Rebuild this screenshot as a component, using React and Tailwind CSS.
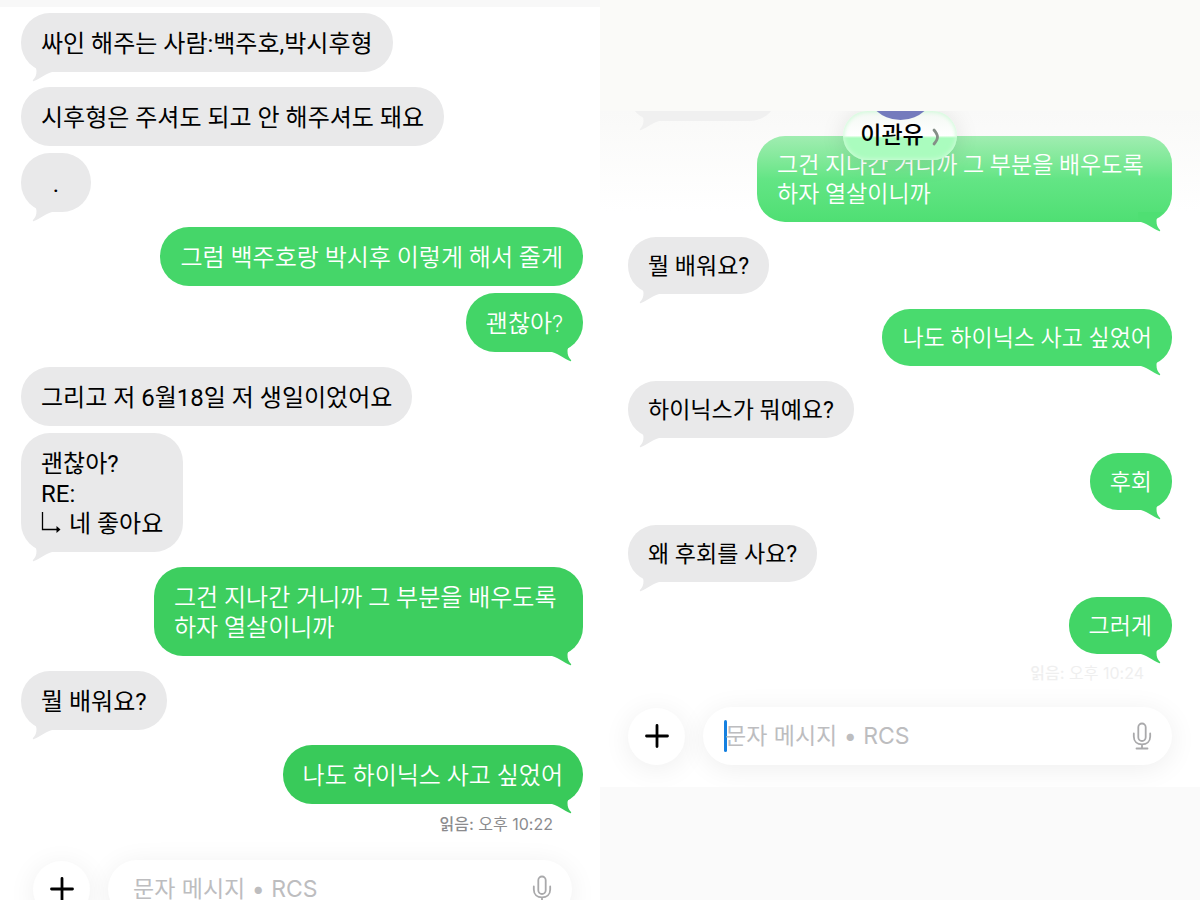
import React from 'react';
import clsx from 'clsx';

const firstChat = [
    { text: '싸인 해주는 사람:백주호,박시후형', tail: true },
    { text: '시후형은 주셔도 되고 안 해주셔도 돼요' },
    { text: '.', tail: true },
    { text: '그럼 백주호랑 박시후 이렇게 해서 줄게', mine: true, color: 'bg-[#45d669] text-[#45d669]' },
    { text: '괜찮아?', mine: true, tail: true, color: 'bg-[#43d567] text-[#43d567]' },
    { text: '그리고 저 6월18일 저 생일이었어요' },
    { reply: true, tail: true },
    {
        text: '그건 지나간 거니까 그 부분을 배우도록 하자 열살이니까',
        mine: true,
        tail: true,
        color: 'bg-[#3dce5f] text-[#3dce5f]',
    },
    { text: '뭘 배워요?', tail: true },
    { text: '나도 하이닉스 사고 싶었어', mine: true, tail: true, color: 'bg-[#39ca5a] text-[#39ca5a]' },
];

const secondChat = [
    {
        text: '그건 지나간 거니까 그 부분을 배우도록 하자 열살이니까',
        mine: true,
        tail: true,
        color: 'bg-linear-to-b from-[#a0edb1] via-[#63e585] to-[#4fdf73] text-[#4fdf73]',
    },
    { text: '뭘 배워요?', tail: true },
    { text: '나도 하이닉스 사고 싶었어', mine: true, tail: true, color: 'bg-[#49db6e] text-[#49db6e]' },
    { text: '하이닉스가 뭐예요?', tail: true },
    { text: '후회', mine: true, tail: true, color: 'bg-[#46d96b] text-[#46d96b]' },
    { text: '왜 후회를 사요?', tail: true },
    { text: '그러게', mine: true, tail: true, color: 'bg-[#42d566] text-[#42d566]' },
];

function Tail({ mine }) {
    return (
        <svg
            viewBox="0 0 28 26"
            fill="currentColor"
            aria-hidden="true"
            className={clsx('absolute -bottom-[10px] h-[26px] w-[28px]', mine ? 'right-2 -scale-x-100' : 'left-2')}
        >
            <path d="M0 6C4 9 7.500 11 7.500 15C7.500 19 6.500 21 4 24C3.500 25 4 25.500 5 25C11 23 18 16 26 15.500L26 6Z" />
        </svg>
    );
}

function ReplyText() {
    return (
        <>
            <span className="block">괜찮아?</span>
            <span className="block">RE:</span>
            <span className="flex items-center gap-2">
                <svg viewBox="0 0 20 24" fill="none" stroke="currentColor" strokeWidth="1.3" className="h-6 w-5" aria-hidden="true">
                    <path d="M1.500 -1V17.500H17" />
                    <path d="M15.500 14L19.500 17.500L15.500 21Z" fill="currentColor" stroke="none" />
                </svg>
                네 좋아요
            </span>
        </>
    );
}

function Bubble({ message, compact }) {
    const { text, mine, tail, reply, color } = message;
    return (
        <li
            className={clsx(
                'relative w-fit break-keep',
                compact
                    ? 'max-w-[415px] rounded-[28px] px-5 pt-[15px] pb-[13px] text-[23px] leading-[29px]'
                    : 'min-w-[70px] max-w-[429px] rounded-[29px] px-5 pt-4 pb-[13px] text-[24px] leading-[30px]',
                mine ? 'self-end' : 'self-start bg-[#e9e9ea] text-[#e9e9ea]',
                text === '.' && 'text-center',
                tail ? 'mb-[15px]' : !compact && 'mb-[7px]',
                color
            )}
        >
            {tail && <Tail mine={mine} />}
            <div className={clsx('relative', mine ? 'font-[350] text-white' : 'text-black')}>
                {reply ? <ReplyText /> : text}
            </div>
        </li>
    );
}

function MicIcon() {
    return (
        <svg viewBox="0 0 20 28" fill="none" stroke="#a9a9ab" strokeWidth="1.800" strokeLinecap="round" className="h-7 w-5">
            <rect x="6.300" y="1.500" width="7.400" height="17.500" rx="3.700" />
            <path d="M1.800 11.500V14.500C1.800 19.500 5.300 22.300 10 22.300S18.200 19.500 18.200 14.500V11.500M10 22.300V26.500M4.500 26.500H15.500" />
        </svg>
    );
}

function Composer({ id, focused }) {
    return (
        <form className="flex shrink-0 items-center gap-[18px]" onSubmit={(e) => e.preventDefault()}>
            <button
                type="button"
                aria-label="추가"
                className="flex size-[57px] shrink-0 items-center justify-center rounded-full bg-white shadow-[0_4px_28px_rgba(0,0,0,0.07)]"
            >
                <svg viewBox="0 0 24 24" stroke="#000" strokeWidth="2.800" strokeLinecap="round" className="size-6">
                    <path d="M12 1.500V22.500M1.500 12H22.500" />
                </svg>
            </button>
            <div
                className={clsx(
                    'flex h-[58px] min-w-0 flex-1 items-center rounded-full bg-white pr-5 shadow-[0_4px_28px_rgba(0,0,0,0.07)]',
                    focused ? 'pl-[21px]' : 'pl-[25px]'
                )}
            >
                {focused && <span className="-mr-[2px] h-8 w-[3px] shrink-0 rounded-full bg-[#1580e0]" />}
                <label htmlFor={id} className="sr-only">메시지 입력</label>
                <input
                    id={id}
                    type="text"
                    placeholder="문자 메시지 • RCS"
                    className="h-9 min-w-0 flex-1 bg-transparent font-[Inter,'Noto_Sans_CJK_KR',sans-serif] text-[23px] outline-none placeholder:text-[#bdbdbf]"
                />
                <button type="button" aria-label="음성 입력" className="shrink-0">
                    <MicIcon />
                </button>
            </div>
        </form>
    );
}

function ContactHeader() {
    return (
        <header className="absolute inset-x-0 top-0 flex justify-center">
            <button
                type="button"
                className="relative flex h-[49px] w-[114px] items-center justify-center gap-2 overflow-hidden rounded-full bg-linear-to-b from-[#f3f8f3] from-0% via-white via-50% to-[#aafcbe] to-55% pt-[2px] text-[23px] font-medium text-black shadow-[0_2px_24px_rgba(0,0,0,0.10),inset_0_0_4px_1px_#cdfbd7]"
            >
                <span className="absolute -top-16 size-[73px] rounded-full bg-[#747bbd]" />
                <span className="relative">이관유</span>
                <svg viewBox="0 0 8 18" fill="none" stroke="#858f87" strokeWidth="2.800" strokeLinecap="round" strokeLinejoin="round" className="relative h-[18px] w-2">
                    <path d="M2 2C4.500 5 5.500 7 5.500 9S4.500 13 2 16" />
                </svg>
            </button>
        </header>
    );
}

export default function App() {
    return (
        <main className="grid h-screen grid-cols-2 overflow-hidden bg-white font-[Roboto,'Noto_Sans_CJK_KR',sans-serif]">
            <section className="flex min-w-0 flex-col overflow-hidden border-t-[7px] border-[#f8f8f8] pt-[6px]">
                <ul className="flex flex-col pr-[17px] pl-[21px]">
                    {firstChat.map((message, i) => (
                        <Bubble key={i} message={message} />
                    ))}
                </ul>
                <p className="-mt-[7px] pr-[47px] text-right font-[Inter,'Noto_Sans_CJK_KR',sans-serif] text-[16px] leading-6 text-[#8b8b8e]">
                    <span className="font-medium">읽음:</span> 오후 10:22
                </p>
                <div className="mt-6 pr-7 pl-[33px]">
                    <Composer id="message-first" />
                </div>
            </section>

            <section className="flex min-w-0 flex-col bg-[#fafafa]">
                <div className="h-[111px] shrink-0 bg-[#fafaf8]" />
                <div className="relative flex flex-col overflow-hidden bg-linear-to-b from-[#f9f9f8] to-white to-15% px-7 pb-[22px]">
                    <div className="relative -mt-[47px] mb-[15px] h-[57px] w-[150px] shrink-0 rounded-full bg-[#f0f0f0] text-[#f0f0f0]" aria-hidden="true">
                        <Tail />
                    </div>
                    <ul className="flex flex-col">
                        {secondChat.map((message, i) => (
                            <Bubble key={i} message={message} compact />
                        ))}
                    </ul>
                    <p className="-mt-2 mb-[22px] pr-7 text-right font-[Inter,'Noto_Sans_CJK_KR',sans-serif] text-[16px] leading-6 text-[#efefef]">
                        <span className="font-medium">읽음:</span> 오후 10:24
                    </p>
                    <Composer id="message-second" focused />
                    <ContactHeader />
                </div>
            </section>
        </main>
    );
}
